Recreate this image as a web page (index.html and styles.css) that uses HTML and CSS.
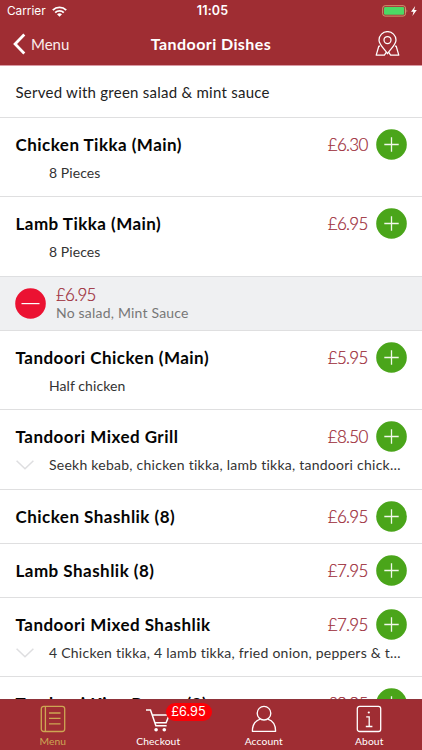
FILE: index.html
```html
<!DOCTYPE html>
<html lang="en">
<head>
<meta charset="utf-8">
<title>Tandoori Dishes</title>
<link rel="stylesheet" href="styles.css">
</head>
<body>
<svg class="defs" aria-hidden="true">
  <symbol id="plus" viewBox="0 0 31 31"><circle cx="15.5" cy="15.5" r="15.3" fill="#4aa51a"/><path d="M8.3 15.5h14.4M15.5 8.3v14.4" stroke="#f1f8ec" stroke-width="1.3"/></symbol>
  <symbol id="down" viewBox="0 0 18 10"><path d="M.6.8 9 8.8 17.4.8" fill="none" stroke="#dedee0" stroke-width="1.5"/></symbol>
</svg>
<div class="app">
  <header>
    <div class="status">
      <div class="carrier"><span>Carrier</span>
        <svg width="15" height="11" viewBox="0 0 15 11" fill="none" stroke="#fff" stroke-width="1.9"><path d="M.8 4.1a9.6 9.6 0 0 1 13.4 0M3.2 6.6a6.2 6.2 0 0 1 8.6 0"/><path d="M5 8.3a3.7 3.7 0 0 1 5 0L7.5 10.8z" fill="#fff" stroke="none"/></svg>
      </div>
      <div class="clock">11:05</div>
      <svg class="battery" width="36" height="12" viewBox="0 0 36 12"><rect x=".7" y=".7" width="22.8" height="10.4" rx="2.4" fill="none" stroke="#cf9770"/><rect x="2" y="2" width="20.2" height="7.8" rx="1.2" fill="#4cd964"/><path d="M24.6 4.2q1.5 1.7 0 3.4z" fill="#cf9770"/><path d="M33.2 1 29 6.7h2.5L30.4 11l4.4-5.9h-2.6z" fill="#fff"/></svg>
    </div>
    <nav class="nav">
      <div class="back"><svg width="13" height="22" viewBox="0 0 13 22"><path d="M11.3 1.6 2.1 11l9.2 9.4" fill="none" stroke="#fff" stroke-width="2.8"/></svg><span>Menu</span></div>
      <h1>Tandoori Dishes</h1>
      <svg class="map" width="25" height="26" viewBox="0 0 25 26" fill="none" stroke="#fff" stroke-width="1.25" stroke-linejoin="round"><path d="M12.5 22.8C10.2 18.6 4 14.1 4 9.1a8.5 8.5 0 0 1 17 0c0 5-6.2 9.5-8.5 13.7z"/><circle cx="12.5" cy="9" r="3.5"/><path d="M5.1 15.2H3.8L1.2 24.1h8.2l2-2.9M19.9 15.2h1.3l2.6 8.9h-8.2l-2-2.9"/></svg>
    </nav>
  </header>
  <main>
    <p class="note">Served with green salad &amp; mint sauce</p>
    <section class="item"><div class="line"><h2>Chicken Tikka (Main)</h2><b>£6.30</b><svg class="add"><use href="#plus"/></svg></div><p class="detail">8 Pieces</p></section>
    <section class="item"><div class="line"><h2>Lamb Tikka (Main)</h2><b>£6.95</b><svg class="add"><use href="#plus"/></svg></div><p class="detail">8 Pieces</p></section>
    <section class="chosen">
      <svg class="add" viewBox="0 0 31 31"><circle cx="15.5" cy="15.5" r="15.3" fill="#eb1232"/><path d="M6.5 15.6h18" stroke="#fff" stroke-width="1.2"/></svg>
      <div><b>£6.95</b><p>No salad, Mint Sauce</p></div>
    </section>
    <section class="item"><div class="line"><h2>Tandoori Chicken (Main)</h2><b>£5.95</b><svg class="add"><use href="#plus"/></svg></div><p class="detail">Half chicken</p></section>
    <section class="item"><div class="line"><h2>Tandoori Mixed Grill</h2><b>£8.50</b><svg class="add"><use href="#plus"/></svg></div><div class="more"><svg class="chev"><use href="#down"/></svg><p class="detail">Seekh kebab, chicken tikka, lamb tikka, tandoori chick…</p></div></section>
    <section class="item short"><div class="line"><h2>Chicken Shashlik (8)</h2><b>£6.95</b><svg class="add"><use href="#plus"/></svg></div></section>
    <section class="item short"><div class="line"><h2>Lamb Shashlik (8)</h2><b>£7.95</b><svg class="add"><use href="#plus"/></svg></div></section>
    <section class="item"><div class="line"><h2>Tandoori Mixed Shashlik</h2><b>£7.95</b><svg class="add"><use href="#plus"/></svg></div><div class="more"><svg class="chev"><use href="#down"/></svg><p class="detail">4 Chicken tikka, 4 lamb tikka, fried onion, peppers &amp; t…</p></div></section>
    <section class="item"><div class="line"><h2>Tandoori King Prawn (8)</h2><b>£9.95</b><svg class="add"><use href="#plus"/></svg></div></section>
  </main>
  <footer>
    <div class="tab active"><svg width="26" height="28" viewBox="0 0 26 28" fill="none" stroke="#cda653" stroke-width="1.3"><rect x="1.3" y="1.3" width="23.4" height="25.2" rx="2.5"/><path d="M5.4 1.3v25.2M9 8h11.5M9 13.4h11.5M9 18.8h11.5"/></svg><span>Menu</span></div>
    <div class="tab"><svg width="26" height="28" viewBox="0 0 26 28" fill="none" stroke="#fff" stroke-width="1.5"><path d="M1 5h4.5l5.4 15.7h10.7M7.2 10h17L21.1 17.7H9.9"/><circle cx="11.1" cy="24.8" r="1.8" fill="#fff" stroke="none"/><circle cx="19.3" cy="24.8" r="1.8" fill="#fff" stroke="none"/></svg><span>Checkout</span><i class="badge">£6.95</i></div>
    <div class="tab"><svg width="26" height="28" viewBox="0 0 26 28" fill="none" stroke="#fff" stroke-width="1.35" stroke-linejoin="round"><circle cx="13" cy="8.2" r="6.8"/><path d="M9.2 14.2C4 15.8 1.4 19.3 1.4 26.3h23.2c0-7-2.6-10.5-7.8-12.1"/></svg><span>Account</span></div>
    <div class="tab"><svg width="26" height="28" viewBox="0 0 26 28" fill="none" stroke="#fff" stroke-width="1.3"><rect x="1.3" y="1.3" width="23.4" height="25.2" rx="2.3"/><path d="M10.2 11.8h3v9.7M9.8 21.5h6.6"/><circle cx="12.8" cy="7.5" r="1.1" fill="#fff" stroke="none"/></svg><span>About</span></div>
  </footer>
</div>
</body>
</html>
```
FILE: styles.css
```css
* { box-sizing: border-box; }
body { margin: 0; background: #fff; color: #050505; font-family: Lato, "Liberation Sans", sans-serif; }
h1, h2, p { margin: 0; }
svg { display: block; flex: none; }
.defs { position: absolute; width: 0; height: 0; }
.app { width: 422px; height: 750px; display: flex; flex-direction: column; overflow: hidden; }
header { height: 66px; flex: none; background: #9f2d33; color: #fff; border-bottom: 1px solid #d99aa4; }
.status { height: 22px; display: grid; grid-template-columns: 1fr auto 1fr; align-items: center; padding: 0 4px 0 7px; }
.carrier { display: flex; align-items: center; gap: 6px; font: 11.8px/22px Inter, sans-serif; }
.clock { font: 600 12.5px/22px Inter, sans-serif; letter-spacing: .2px; }
.battery { justify-self: end; }
.nav { height: 43px; display: grid; grid-template-columns: 1fr auto 1fr; align-items: center; padding: 0 22px 0 13px; }
.back { display: flex; align-items: center; gap: 5px; font-size: 15px; color: #fbecec; }
h1 { margin-left: 9px; font-size: 16px; font-weight: 700; letter-spacing: .42px; }
.map { justify-self: end; }
main { flex: 1; min-height: 0; overflow: hidden; }
.note { height: 51px; line-height: 52px; padding-left: 15.5px; font-size: 15px; letter-spacing: .25px; color: #222; }
.item { height: 79.4px; border-top: 1px solid #dfdfe0; }
.short { height: 54px; }
.line { height: 53px; display: flex; align-items: center; padding: 0 15px 0 15.5px; }
h2 { flex: 1; font-size: 17px; font-weight: 700; letter-spacing: .47px; white-space: nowrap; }
b { font-size: 17px; font-weight: 300; letter-spacing: -.75px; color: #9b2835; -webkit-text-stroke: .2px #9b2835; }
.add { width: 31px; height: 31px; margin-left: 8.5px; }
.detail { margin: -9px 0 0 49px; font-size: 14px; line-height: 22px; letter-spacing: .07px; color: #333; white-space: nowrap; }
.more { display: flex; padding-left: 16px; }
.more .detail { margin-left: 15px; letter-spacing: .25px; }
.chev { width: 18px; height: 10px; margin-top: -3px; }
.chosen { height: 54px; display: flex; align-items: center; background: #eff0f2; border-top: 1px solid #dedfe1; padding-left: 15px; }
.chosen .add { margin: 0 10px 0 0; }
.chosen b { display: block; line-height: 18px; padding-top: 1px; }
.chosen p { font-size: 14px; line-height: 17px; letter-spacing: .2px; color: #777; }
footer { height: 51px; flex: none; display: grid; grid-template-columns: repeat(4, 1fr); background: #9f2d33; color: #fff; border-top: 1px solid #8f333a; }
.tab { position: relative; display: flex; flex-direction: column; align-items: center; padding-top: 5px; }
.tab span { font-size: 10.3px; line-height: 16px; letter-spacing: .1px; margin-top: 0; }
.active { color: #cda653; }
.badge { position: absolute; left: 60px; top: 3px; width: 46px; height: 18px; border-radius: 9px; background: #fb0007; font: 12.7px/18px Inter, sans-serif; text-align: center; z-index: 1; }
```
